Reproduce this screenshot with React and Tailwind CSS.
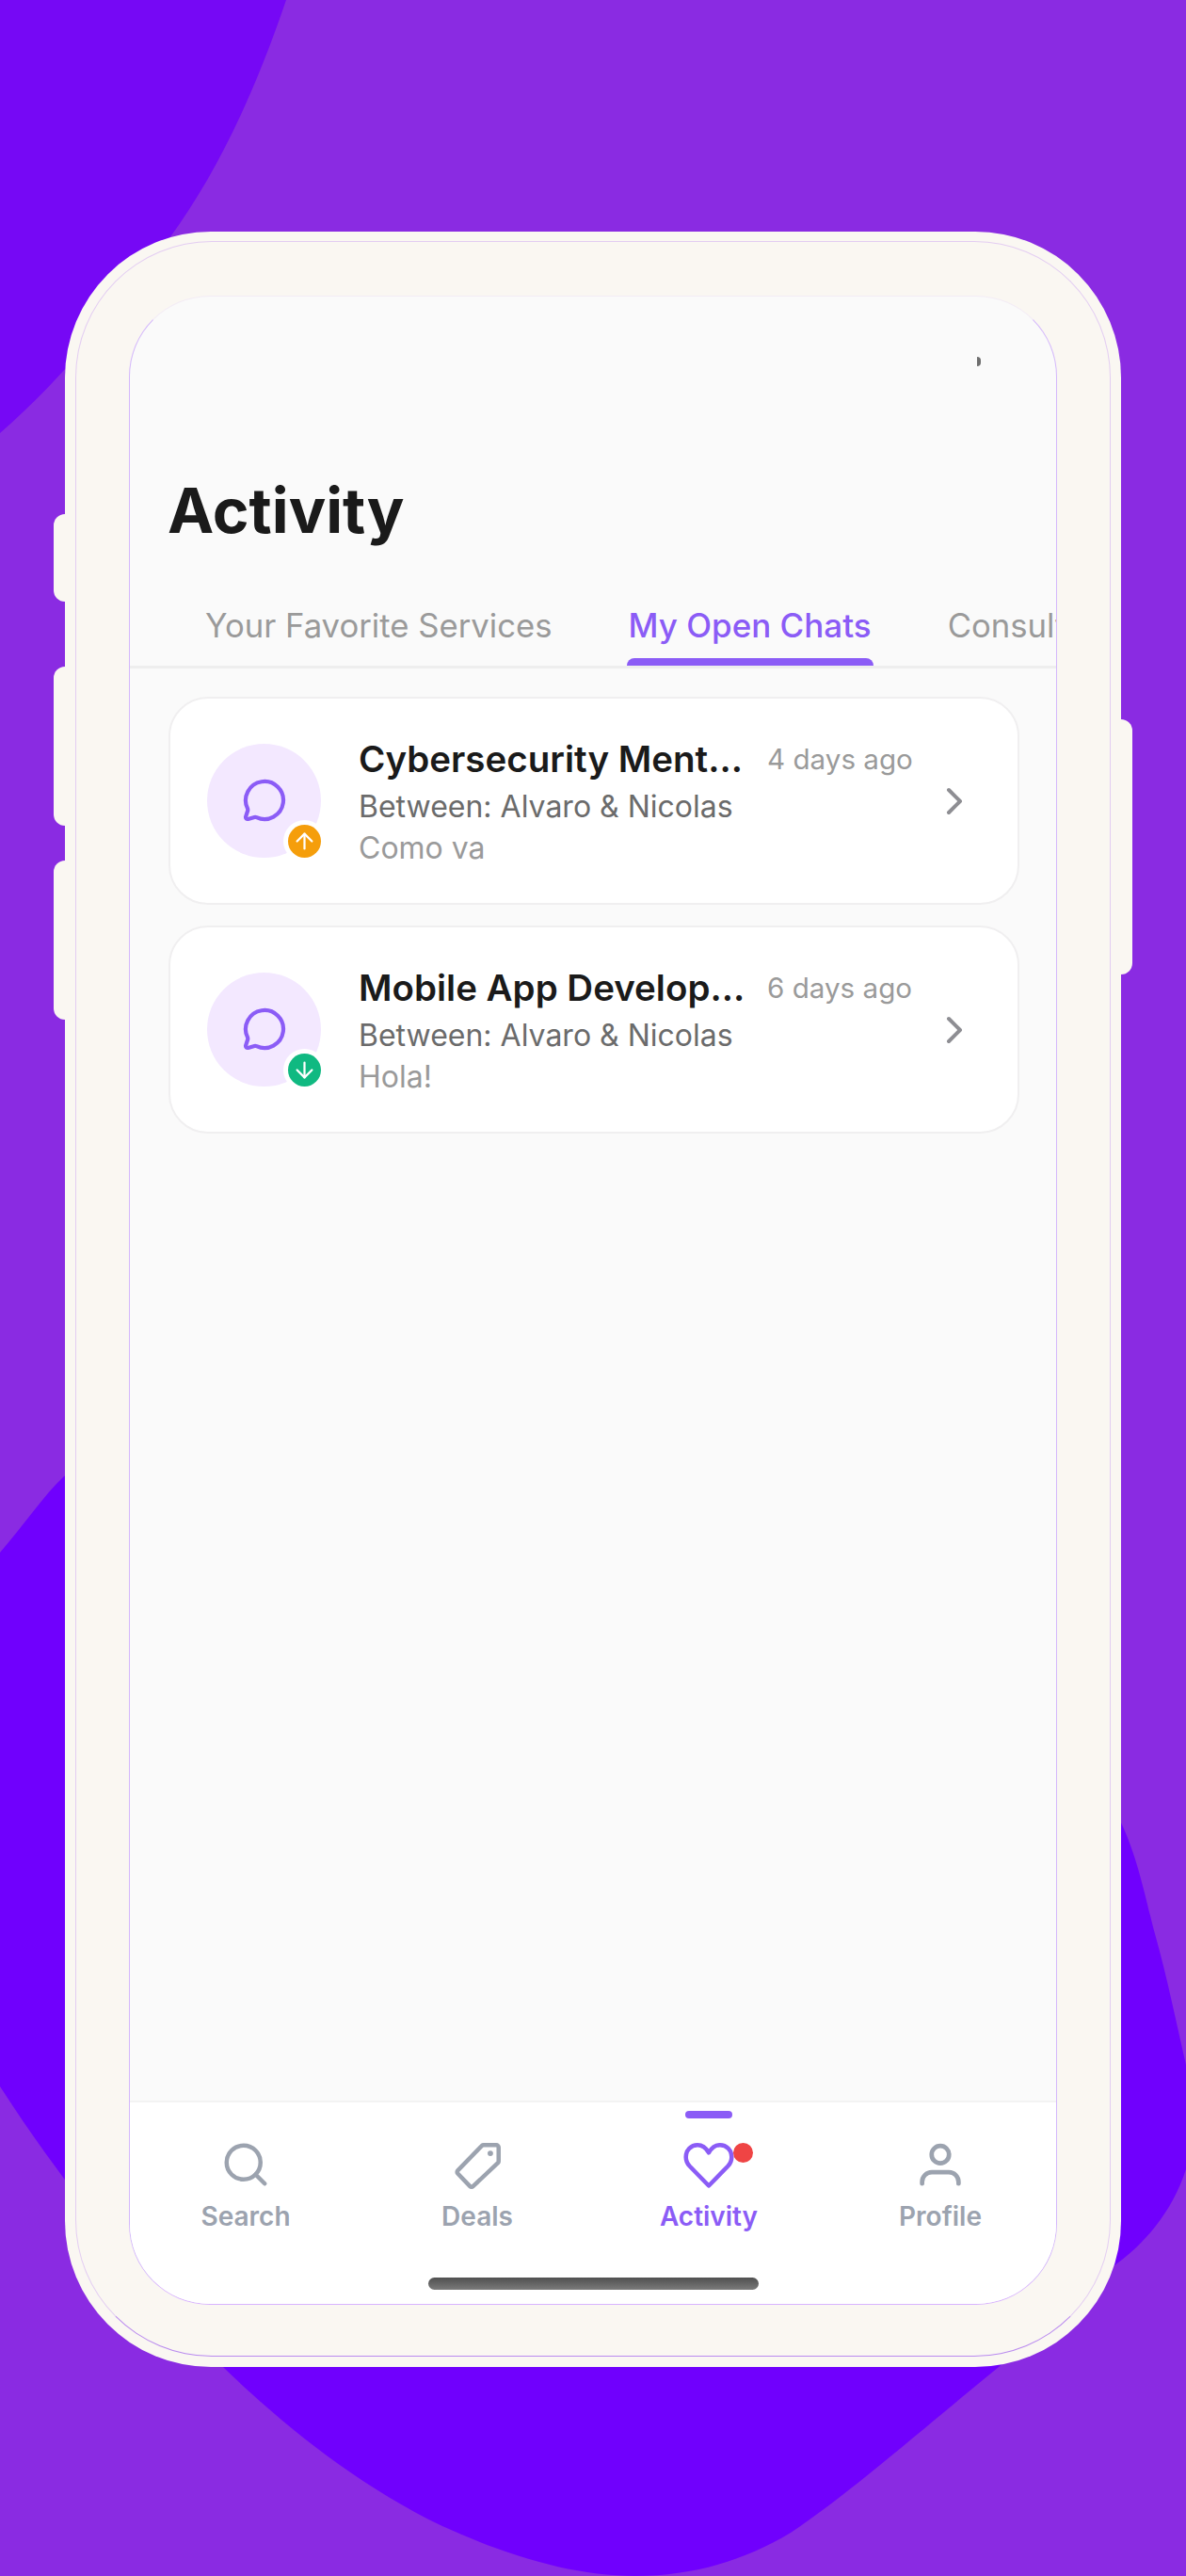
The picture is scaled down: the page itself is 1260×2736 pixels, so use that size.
import { ArrowDown, ArrowUp, ChevronRight, MessageCircle, Search } from 'lucide-react'

const chats = [
  { title: 'Cybersecurity Ment...', time: '4 days ago', message: 'Como va', outgoing: true },
  { title: 'Mobile App Develop...', time: '6 days ago', message: 'Hola!', outgoing: false },
]

function TagIcon() {
  return (
    <svg viewBox="0 0 24 24" className="w-[54px] h-[54px]" fill="none" stroke="currentColor" strokeWidth="2" strokeLinejoin="round">
      <path d="M15 2.8H21a1.1 1.1 0 0 1 1.1 1.1V10.4a1.2 1.2 0 0 1-.3.8L10 22.3a1 1 0 0 1-1.4 0L2.8 16.2a1 1 0 0 1 0-1.4L14.2 3.1a1.2 1.2 0 0 1 .8-.3z" />
      <circle cx="18.2" cy="6.7" r="1.3" fill="currentColor" stroke="none" />
    </svg>
  )
}

function HeartIcon() {
  return (
    <svg viewBox="0 0 24 24" className="w-[54px] h-[54px]" fill="none" stroke="currentColor" strokeWidth="2" strokeLinejoin="round">
      <path d="M12 22 3 12.8C1.8 11.5 1.2 10 1.2 8.4 1.2 5.2 3.6 2.8 6.7 2.8 8.8 2.8 10.6 4 12 6.4 13.4 4 15.2 2.8 17.3 2.8 20.4 2.8 22.8 5.2 22.8 8.4 22.8 10 22.2 11.5 21 12.8z" />
    </svg>
  )
}

function UserIcon() {
  return (
    <svg viewBox="0 0 24 24" className="w-[54px] h-[54px]" fill="none" stroke="currentColor" strokeWidth="2.1" strokeLinecap="round">
      <circle cx="12" cy="7.3" r="4.1" />
      <path d="M3.4 21v-.8a4.6 4.6 0 0 1 4.6-4.6h8a4.6 4.6 0 0 1 4.6 4.6v.8" />
    </svg>
  )
}

function ChatCard({ chat }) {
  return (
    <div className="flex items-center h-[221px] rounded-[42px] border-2 border-[#f0eff0] bg-white pl-[39px] pr-[43px]">
      <div className="relative shrink-0 w-[121px] h-[121px] rounded-full bg-[#f3e8ff] flex items-center justify-center text-[#8b5cf6]">
        <MessageCircle size={48} strokeWidth={2.1} className="mb-[2px]" />
        <div className="absolute -right-[5px] -bottom-[5px] w-[45px] h-[45px] rounded-full bg-white flex items-center justify-center">
          <div className={`w-[35px] h-[35px] rounded-full flex items-center justify-center text-white ${chat.outgoing ? 'bg-[#f59e0b]' : 'bg-[#10b981]'}`}>
            {chat.outgoing ? <ArrowUp size={27} strokeWidth={2} /> : <ArrowDown size={27} strokeWidth={2} />}
          </div>
        </div>
      </div>

      <div className="ml-[40px] pt-[3px] flex-1 min-w-0">
        <div className="flex items-center">
          <span className="w-[434px] shrink-0 text-[38.5px] leading-[47px] font-semibold text-[#1a1a1a] whitespace-nowrap">{chat.title}</span>
          <span className="text-[29.6px] leading-[47px] text-[#9a9a9a] whitespace-nowrap">{chat.time}</span>
        </div>
        <div className="mt-[7px] text-[32px] leading-[40px] text-[#6b6b6b]">Between: Alvaro &amp; Nicolas</div>
        <div className="mt-[4px] text-[32px] leading-[40px] text-[#9a9a9a]">{chat.message}</div>
      </div>

      <ChevronRight size={48} strokeWidth={2} className="shrink-0 text-[#8e8e93]" />
    </div>
  )
}

function NavItem({ label, active, children }) {
  return (
    <div className={`relative flex flex-col items-center pt-[39px] ${active ? 'text-[#8b5cf6]' : 'text-[#9ca3af]'}`}>
      {active && <div className="absolute top-[9px] w-[50px] h-[8px] rounded-full bg-[#8b5cf6]" />}
      {children}
      <span className="mt-[11px] text-[28px] leading-[34px] font-semibold">{label}</span>
    </div>
  )
}

export default function App() {
  return (
    <div className="relative w-[1260px] h-[2736px] overflow-hidden bg-[#8a2be2] font-[Inter,sans-serif]">
      {/* background blobs */}
      <svg className="absolute inset-0" width="1260" height="2736" viewBox="0 0 1260 2736">
        <path fill="#7608f5" d="M0 0H304C270 100 230 185 180 253 140 310 70 400 0 460Z" />
        <path fill="#7000fd" d="M0 1649C25 1620 45 1590 68 1568L600 1300 1191 1936C1210 1975 1220 2030 1227 2054 1240 2100 1250 2150 1260 2193V2304C1245 2350 1215 2385 1180 2409L1061 2514C980 2580 900 2650 840 2690 790 2720 735 2736 675 2736 610 2736 540 2715 470 2683 380 2640 300 2575 237 2514 150 2420 70 2325 0 2216Z" />
      </svg>

      <div className="relative ml-[69px] pt-[246px] w-[1122px]">
        <div className="relative">
          {/* side buttons */}
          <div className="absolute -left-[12px] top-[300px] w-[12px] h-[93px] rounded-l-[12px] bg-[#faf7f2]" />
          <div className="absolute -left-[12px] top-[462px] w-[12px] h-[169px] rounded-l-[12px] bg-[#faf7f2]" />
          <div className="absolute -left-[12px] top-[668px] w-[12px] h-[169px] rounded-l-[12px] bg-[#faf7f2]" />
          <div className="absolute -right-[12px] top-[518px] w-[12px] h-[271px] rounded-r-[12px] bg-[#faf7f2]" />

          <div className="h-[2268px] rounded-[155px] bg-[#faf7f2] pl-[11px] pr-[11px] pt-[10px] pb-[11px]">
            <div className="h-full rounded-[145px] border border-[#e3cdf2] border-b-[#b98aef] pl-[56px] pr-[56px] pt-[57px] pb-[54px]">
              <div className="relative h-full flex flex-col overflow-hidden rounded-[86px] border border-[#d4b8fb] border-t-[#f3ecf5] border-b-[#d8b4fe] bg-[#fafafa]">
                <div className="absolute left-[900px] top-[64px] w-[4px] h-[10px] rounded-r-full bg-[#6e6e6e]" />

                <div className="flex-1 min-h-0">
                  <h1 className="pt-[186px] pl-[40px] text-[66px] leading-[82px] font-bold text-[#1a1a1a]">Activity</h1>

                  <div className="mt-[61px] flex gap-[80px] pl-[80px] overflow-hidden border-b-[3px] border-[#eeeeee] whitespace-nowrap text-[34.7px] leading-[41px] text-[#9a9a9a]">
                    <div className="pb-[22px]">Your Favorite Services</div>
                    <div className="relative pb-[22px] px-[1px] text-[35px] font-medium text-[#8b5cf6]">
                      My Open Chats
                      <div className="absolute -left-[1px] -right-[1px] bottom-0 h-[8px] rounded-t-[8px] bg-[#8b5cf6]" />
                    </div>
                    <div className="pb-[22px]">Consultations</div>
                  </div>

                  <div className="flex flex-col gap-[22px] pt-[30px] pl-[41px] pr-[39px]">
                    {chats.map(chat => <ChatCard key={chat.title} chat={chat} />)}
                  </div>
                </div>

                <div className="h-[216px] shrink-0 border-t-2 border-[#f3f3f3] bg-white flex flex-col">
                  <div className="grid grid-cols-4">
                    <NavItem label="Search"><Search size={54} strokeWidth={2} /></NavItem>
                    <NavItem label="Deals"><TagIcon /></NavItem>
                    <NavItem label="Activity" active>
                      <div className="relative">
                        <HeartIcon />
                        <div className="absolute -right-[20px] top-[4px] w-[21px] h-[21px] rounded-full bg-[#ef4444]" />
                      </div>
                    </NavItem>
                    <NavItem label="Profile"><UserIcon /></NavItem>
                  </div>
                  <div className="mx-auto mt-[48px] w-[351px] h-[13px] rounded-[7px] bg-gradient-to-b from-[#505050] to-[#7a7a7a]" />
                </div>
              </div>
            </div>
          </div>
        </div>
      </div>
    </div>
  )
}
